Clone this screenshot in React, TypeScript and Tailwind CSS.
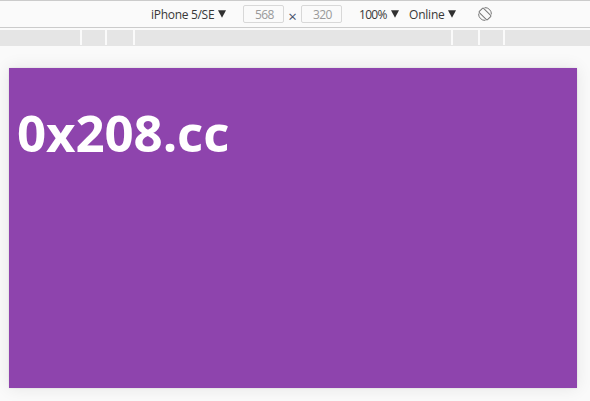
const segments = ['w-20', 'w-[23px]', 'w-[26px]', 'w-[316px]', 'w-[25px]', 'w-[23px]', 'w-[85px]'];

function Caret() {
  return (
    <svg className="h-2 w-2 shrink-0" viewBox="0 0 8 8" aria-hidden="true">
      <path d="M0 .3h8L4 7.7z" fill="#303030" />
    </svg>
  );
}

function Picker({ label, className, textClass }: { label: string; className: string; textClass: string }) {
  return (
    <button className={`flex items-center justify-between whitespace-nowrap ${className}`}>
      <span className={`pt-0.5 ${textClass}`}>{label}</span>
      <Caret />
    </button>
  );
}

function SizeField({ value }: { value: string }) {
  return (
    <div className="flex h-[18px] w-[41px] items-center justify-center rounded-[2px] border border-[#d8d8d8] pt-0.5 pl-0.5 tracking-[-0.6px] text-[#999]">
      {value}
    </div>
  );
}

function RotateIcon() {
  return (
    <svg className="ml-[21px] h-4 w-4 shrink-0" viewBox="0 0 16 16" fill="none" stroke="#777" aria-hidden="true">
      <rect x="5" y="2.2" width="6" height="11.6" rx=".8" transform="rotate(-45 8 8)" />
      <path d="M7.6 1.6a6.4 6.4 0 0 1 6.8 6.8M8.4 14.4a6.4 6.4 0 0 1-6.8-6.8" />
    </svg>
  );
}

export default function App() {
  return (
    <div className="h-[401px] w-[590px] overflow-hidden bg-[#fafafa] font-['Open_Sans','Noto_Sans',sans-serif] text-[12px] text-[#383838]">
      <header className="flex h-7 items-center border-y border-[#cbcbcb] pl-[151px]">
        <Picker label="iPhone 5/SE" className="w-[75px]" textClass="tracking-[-0.3px]" />
        <div className="ml-[17px] flex items-center">
          <SizeField value="568" />
          <span className="w-[17px] pt-1 text-center text-[15px] leading-4 text-[#46506a]">×</span>
          <SizeField value="320" />
        </div>
        <Picker label="100%" className="ml-[17px] w-10" textClass="tracking-[-0.7px]" />
        <Picker label="Online" className="ml-2.5 w-[47px]" textClass="tracking-[-0.2px]" />
        <RotateIcon />
      </header>
      <div className="mt-0.5 flex h-4 gap-0.5 border-b border-[#e5e5e5]">
        {segments.map((width, i) => (
          <div key={i} className={`h-[15px] shrink-0 bg-[#e5e5e5] ${width}`} />
        ))}
      </div>
      <main className="mt-[22px] ml-[9px] h-80 w-[568px] bg-[#8e44ad] pt-[30px] pl-2 shadow-[0_0_16px_rgba(0,0,0,0.09),0_0_2px_rgba(0,0,0,0.1)]">
        <h1 className="text-[51px] leading-[68px] font-bold tracking-[-0.1px] text-white">0x208.cc</h1>
      </main>
    </div>
  );
}
